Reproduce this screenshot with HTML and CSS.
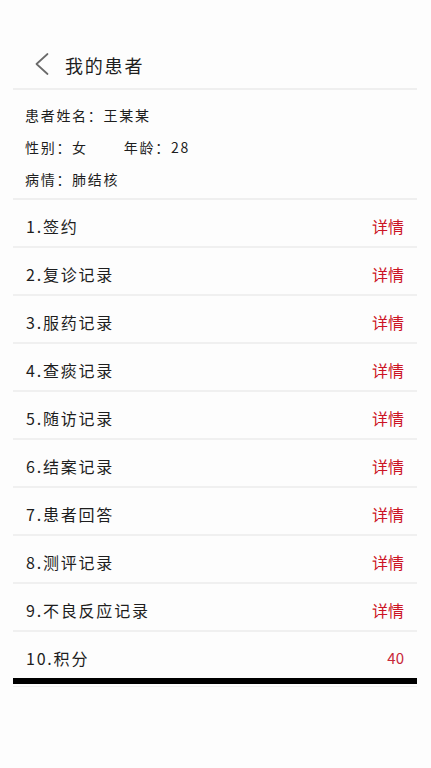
FILE: index.html
```html
<!DOCTYPE html>
<html lang="zh-CN">
<head>
<meta charset="utf-8">
<title>我的患者</title>
<link rel="stylesheet" href="styles.css">
</head>
<body>
<div class="page">
  <header class="topbar">
    <svg class="back" width="14" height="22" viewBox="0 0 14 22" aria-hidden="true">
      <polyline points="12.5,1 1.5,11 12.5,21" fill="none" stroke="#6a6a6a" stroke-width="1.7" stroke-linecap="round" stroke-linejoin="round"/>
    </svg>
    <h1 class="title">我的患者</h1>
  </header>

  <section class="info">
    <p class="info-line">患者姓名：王某某</p>
    <p class="info-line"><span>性别：女</span><span class="age">年龄：28</span></p>
    <p class="info-line">病情：肺结核</p>
  </section>

  <ul class="list">
    <li class="row"><span class="label">1.签约</span><span class="link">详情</span></li>
    <li class="row"><span class="label">2.复诊记录</span><span class="link">详情</span></li>
    <li class="row"><span class="label">3.服药记录</span><span class="link">详情</span></li>
    <li class="row"><span class="label">4.查痰记录</span><span class="link">详情</span></li>
    <li class="row"><span class="label">5.随访记录</span><span class="link">详情</span></li>
    <li class="row"><span class="label">6.结案记录</span><span class="link">详情</span></li>
    <li class="row"><span class="label">7.患者回答</span><span class="link">详情</span></li>
    <li class="row"><span class="label">8.测评记录</span><span class="link">详情</span></li>
    <li class="row"><span class="label">9.不良反应记录</span><span class="link">详情</span></li>
    <li class="row last"><span class="label">10.积分</span><span class="score">40</span></li>
  </ul>
  <div class="footer-space"></div>
</div>
</body>
</html>
```

FILE: styles.css
```css
html, body {
  margin: 0;
  padding: 0;
  background: #fdfdfd;
}

body {
  font-family: "Noto Sans CJK SC", "Noto Sans", sans-serif;
  color: #1e1e1e;
}

.page {
  margin: 0 14px 0 13px;
}

.topbar {
  display: flex;
  align-items: center;
  height: 42px;
  padding: 44px 0 2px 22px;
  border-bottom: 2px solid #efefef;
}

.back {
  display: block;
  flex: none;
  margin-top: -3px;
}

.title {
  margin: 0 0 0 16px;
  font-size: 18px;
  font-weight: 400;
  letter-spacing: 1.8px;
  line-height: 42px;
}

.info {
  padding: 9px 0 3px 12px;
  border-bottom: 2px solid #efefef;
}

.info-line {
  margin: 0;
  font-size: 14px;
  letter-spacing: 1.7px;
  line-height: 32px;
  height: 32px;
}

.age {
  margin-left: 36px;
}

.list {
  list-style: none;
  margin: 0;
  padding: 0;
}

.row {
  display: flex;
  justify-content: space-between;
  align-items: center;
  height: 22px;
  padding: 15px 13px 9px 13px;
  border-bottom: 2px solid #f0f0f0;
}

.row.last {
  border-bottom: 6px solid #000;
}

.label {
  font-size: 16px;
  letter-spacing: 1.8px;
  line-height: 22px;
}

.link {
  font-size: 16px;
  color: #cc1424;
  line-height: 22px;
}

.score {
  font-size: 15px;
  color: #c8283a;
  line-height: 22px;
}

.footer-space {
  height: 30px;
  border-top: 1px solid #f1f1f1;
  margin-top: 2px;
}
```
